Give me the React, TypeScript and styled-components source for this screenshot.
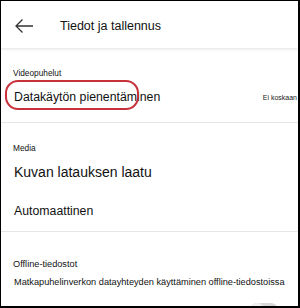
import React from "react";
import styled, { createGlobalStyle } from "styled-components";

const Global = createGlobalStyle`
  html, body { margin: 0; padding: 0; background: #000; }
  body { font-family: "Liberation Sans", Arial, sans-serif; }
`;

const Frame = styled.div`
  width: 297px;
  height: 305px;
  margin: 1px 0 0 1px;
  background: #fff;
  overflow: hidden;
  display: flex;
  flex-direction: column;
  color: #111;
`;

const Header = styled.header`
  height: 47px;
  flex-shrink: 0;
  display: flex;
  align-items: center;
  padding-top: 3px;
  box-sizing: border-box;
  box-shadow: 0 1px 3px rgba(0, 0, 0, 0.12);
  position: relative;
  z-index: 1;
`;

const BackButton = styled.div`
  width: 59px;
  display: flex;
  align-items: center;
  padding-left: 13px;
  box-sizing: border-box;
`;

const Title = styled.h1`
  margin: 0;
  font-size: 12.5px;
  font-weight: 400;
  color: #111;
`;

const Section = styled.section<{ $pad?: string; $divider?: boolean }>`
  display: flex;
  flex-direction: column;
  padding: ${(p) => p.$pad ?? "0"};
  border-bottom: ${(p) => (p.$divider ? "1px solid #e6e6e6" : "none")};
`;

const Label = styled.div<{ $size?: number }>`
  font-size: ${(p) => p.$size ?? 8.3}px;
  color: #111;
  padding-left: 12px;
`;

const Row = styled.div<{ $h: number }>`
  height: ${(p) => p.$h}px;
  display: flex;
  align-items: center;
  justify-content: space-between;
  padding: 0 1px 0 13px;
`;

const RowText = styled.span<{ $size: number }>`
  font-size: ${(p) => p.$size}px;
  color: #111;
  position: relative;
`;

const Highlight = styled.span`
  position: absolute;
  left: -9px;
  top: -10px;
  width: 130px;
  height: 26px;
  border: 2px solid #c8303a;
  border-radius: 13px;
`;

const Value = styled.span`
  font-size: 7px;
  color: #222;
`;

const Toggle = styled.div`
  margin: 8px 0 0 249px;
  width: 28px;
  height: 14px;
  border-radius: 7px;
  background: #d8d8d8;
  position: relative;
  &::after {
    content: "";
    position: absolute;
    left: 0;
    top: 0;
    width: 14px;
    height: 14px;
    border-radius: 50%;
    background: #f2f2f2;
  }
`;

export default function App() {
  return (
    <>
      <Global />
      <Frame>
        <Header>
          <BackButton>
            <svg width="20" height="16" viewBox="0 0 20 16" fill="none">
              <path d="M19 8H2M8.5 1.5L2 8l6.5 6.5" stroke="#333" strokeWidth="1.3" />
            </svg>
          </BackButton>
          <Title>Tiedot ja tallennus</Title>
        </Header>
        <Section $pad="20px 0 0" $divider>
          <Label>Videopuhelut</Label>
          <Row $h={44}>
            <RowText $size={12.3} style={{ marginTop: -6 }}>
              <Highlight />
              Datakäytön pienentäminen
            </RowText>
            <Value style={{ marginTop: -6 }}>Ei koskaan</Value>
          </Row>
        </Section>
        <Section $pad="20px 0 0" $divider>
          <Label>Media</Label>
          <Row $h={38}>
            <RowText $size={14}>Kuvan latauksen laatu</RowText>
          </Row>
          <Row $h={40}>
            <RowText $size={12.3}>Automaattinen</RowText>
          </Row>
        </Section>
        <Section $pad="27px 0 0">
          <Label $size={9.2}>Offline-tiedostot</Label>
          <Row $h={26}>
            <RowText $size={9.2}>Matkapuhelinverkon datayhteyden käyttäminen offline-tiedostoissa</RowText>
          </Row>
          <Toggle />
        </Section>
      </Frame>
    </>
  );
}
